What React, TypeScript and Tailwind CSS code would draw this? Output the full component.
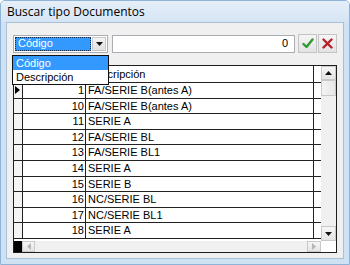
import { useMemo } from 'react';

const ROWS = [
  { n: '1', d: 'FA/SERIE B(antes A)' },
  { n: '10', d: 'FA/SERIE B(antes A)' },
  { n: '11', d: 'SERIE A' },
  { n: '12', d: 'FA/SERIE BL' },
  { n: '13', d: 'FA/SERIE BL1' },
  { n: '14', d: 'SERIE A' },
  { n: '15', d: 'SERIE B' },
  { n: '16', d: 'NC/SERIE BL' },
  { n: '17', d: 'NC/SERIE BL1' },
  { n: '18', d: 'SERIE A' },
];

const FONT = "font-['Liberation_Sans',Arial,sans-serif]";

function Tri({ dir }: { dir: 'up' | 'down' | 'left' | 'right' }) {
  const pts = {
    up: '0,4 7,4 3.5,0',
    down: '0,0 7,0 3.5,4',
    left: '4,0 4,7 0,3.5',
    right: '0,0 0,7 4,3.5',
  }[dir];
  const w = dir === 'up' || dir === 'down' ? 7 : 4;
  const h = dir === 'up' || dir === 'down' ? 4 : 7;
  const color = dir === 'left' || dir === 'right' ? '#b5b5b5' : '#111';
  return (
    <svg width={w} height={h} viewBox={`0 0 ${w} ${h}`}>
      <polygon points={pts} fill={color} />
    </svg>
  );
}

function ScrollBtn({ dir, className }: { dir: 'up' | 'down' | 'left' | 'right'; className: string }) {
  return (
    <div className={`flex items-center justify-center border border-[#c9c9c9] bg-gradient-to-b from-[#f6f6f6] to-[#e4e4e4] ${className}`}>
      <Tri dir={dir} />
    </div>
  );
}

export default function App() {
  const rows = useMemo(() => ROWS, []);

  return (
    <div className={`w-[350px] h-[265px] flex flex-col bg-[#cfe2f3] border border-[#8fb3d6] rounded-t-[5px] overflow-hidden ${FONT}`}>
      {/* title bar */}
      <div className="h-[21px] shrink-0 flex items-center pl-[6px] bg-gradient-to-b from-[#e6eff9] to-[#d5e4f4]">
        <span className="text-[12px] text-black font-['Open_Sans',sans-serif] leading-none">Buscar tipo Documentos</span>
      </div>

      {/* client area */}
      <div className="relative flex-1 mx-[5px] mb-[5px] bg-[#f0f0f0] border border-[#a9bfd6] flex flex-col">
        {/* search row */}
        <div className="mt-[11px] ml-[6px] flex items-center">
          <div className="w-[95px] h-[18px] border border-[#abadb3] bg-white flex items-stretch p-[1px]">
            <div className="flex-1 bg-[#3399ff] border border-dotted border-[#0c2a4d] flex items-center pl-[2px] text-[11px] text-white">
              Código
            </div>
            <div className="w-[14px] ml-[1px] flex items-center justify-center border border-[#c8c8c8] bg-gradient-to-b from-[#f4f4f4] to-[#e1e1e1]">
              <Tri dir="down" />
            </div>
          </div>
          <div className="ml-[4px] w-[183px] h-[18px] border border-[#abadb3] bg-white flex items-center justify-end pr-[6px] text-[11px] text-black">
            0
          </div>
          <button className="ml-[3px] w-[19px] h-[19px] flex items-center justify-center border border-[#c4c4c4] bg-gradient-to-b from-[#f5f5f5] to-[#e3e3e3]">
            <svg width="12" height="11" viewBox="0 0 12 11">
              <path d="M1.5 6 L4.5 9 L10.5 1.5" fill="none" stroke="#2f9a2f" strokeWidth="2.4" strokeLinecap="round" strokeLinejoin="round" />
            </svg>
          </button>
          <button className="ml-[1px] w-[19px] h-[19px] flex items-center justify-center border border-[#c4c4c4] bg-gradient-to-b from-[#f5f5f5] to-[#e3e3e3]">
            <svg width="11" height="11" viewBox="0 0 11 11">
              <path d="M1.5 1.5 L9.5 9.5 M9.5 1.5 L1.5 9.5" fill="none" stroke="#b3222a" strokeWidth="2.4" strokeLinecap="round" />
            </svg>
          </button>
        </div>

        {/* grid */}
        <div className="mt-[12px] ml-[6px] w-[324px] h-[188px] border border-[#1e1e1e] bg-white flex flex-col text-[11px] text-black">
          <div className="flex h-[175px]">
            <div className="flex-1 overflow-hidden flex flex-col">
              {/* header */}
              <div className="h-[17px] shrink-0 flex border-b border-[#222]">
                <div className="w-[9px] border-r border-[#222] bg-[#f4f4f4]" />
                <div className="w-[63px] border-r border-[#222]" />
                <div className="w-[228px] border-r border-[#222] flex items-center pl-[2px]">Descripción</div>
                <div className="flex-1" />
              </div>
              {rows.map((r, i) => (
                <div key={r.n} className="h-[15.6px] shrink-0 flex border-b border-[#222]">
                  <div className="w-[9px] border-r border-[#222] bg-[#f4f4f4] flex items-center justify-start pl-[1px]">
                    {i === 0 && (
                      <svg width="5" height="8" viewBox="0 0 5 8">
                        <polygon points="0,0 0,8 5,4" fill="#000" />
                      </svg>
                    )}
                  </div>
                  <div className="w-[63px] border-r border-[#222] flex items-center justify-end pr-[1px]">{r.n}</div>
                  <div className="w-[228px] border-r border-[#222] flex items-center pl-[2px] whitespace-nowrap">{r.d}</div>
                  <div className="flex-1" />
                </div>
              ))}
            </div>
            {/* vertical scrollbar */}
            <div className="w-[15px] shrink-0 bg-[#f0f0f0] flex flex-col">
              <ScrollBtn dir="up" className="h-[14px]" />
              <div className="h-[16px] border border-[#c9c9c9] bg-gradient-to-r from-[#f4f4f4] to-[#e6e6e6]" />
              <div className="flex-1" />
              <ScrollBtn dir="down" className="h-[15px]" />
            </div>
          </div>
          {/* horizontal scrollbar */}
          <div className="flex-1 flex bg-[#f0f0f0]">
            <div className="w-[8px] bg-black" />
            <ScrollBtn dir="left" className="w-[13px]" />
            <div className="flex-1" />
            <ScrollBtn dir="right" className="w-[14px]" />
            <div className="w-[15px] bg-white" />
          </div>
        </div>

        {/* open dropdown list */}
        <div className="absolute left-[5px] top-[32px] w-[97px] border border-[#111] bg-white text-[11px] flex flex-col py-[0px]">
          <div className="h-[14px] bg-[#3399ff] text-white flex items-center pl-[3px]">Código</div>
          <div className="h-[14px] text-black flex items-center pl-[3px]">Descripción</div>
        </div>
      </div>
    </div>
  );
}
